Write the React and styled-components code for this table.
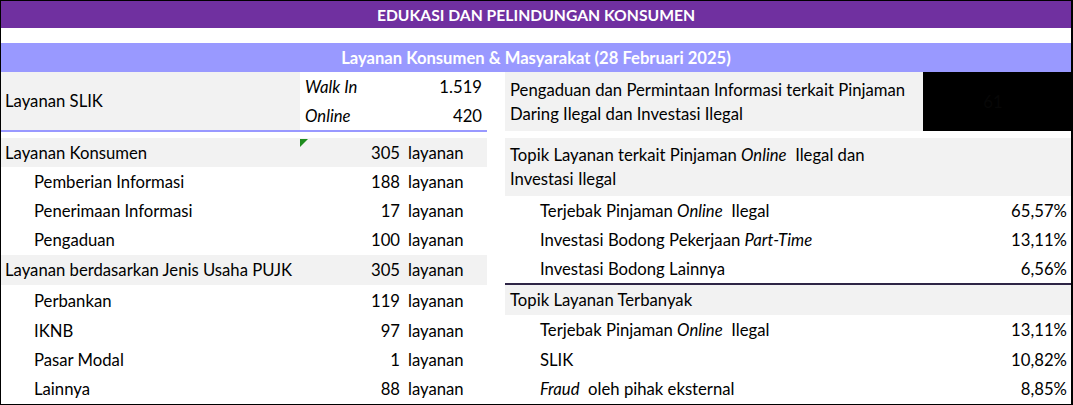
import React from "react";
import styled, { createGlobalStyle } from "styled-components";

const GlobalStyle = createGlobalStyle`
  html, body {
    margin: 0;
    padding: 0;
    background: #ffffff;
  }
  body {
    font-family: Lato, "Open Sans", sans-serif;
    color: #000000;
  }
`;

const konsumen = [
  { label: "Layanan Konsumen", value: "305", head: true, h: 29 },
  { label: "Pemberian Informasi", value: "188", h: 29 },
  { label: "Penerimaan Informasi", value: "17", h: 29 },
  { label: "Pengaduan", value: "100", h: 30 },
  { label: "Layanan berdasarkan Jenis Usaha PUJK", value: "305", head: true, h: 30 },
  { label: "Perbankan", value: "119", h: 31 },
  { label: "IKNB", value: "97", h: 29 },
  { label: "Pasar Modal", value: "1", h: 29 },
  { label: "Lainnya", value: "88", h: 29 },
];

const ilegal = [
  { label: <>Terjebak Pinjaman <i>Online</i>&nbsp; Ilegal</>, value: "65,57%" },
  { label: <>Investasi Bodong Pekerjaan <i>Part-Time</i></>, value: "13,11%" },
  { label: "Investasi Bodong Lainnya", value: "6,56%" },
];

const terbanyak = [
  { label: <>Terjebak Pinjaman <i>Online</i>&nbsp; Ilegal</>, value: "13,11%", h: 30 },
  { label: "SLIK", value: "10,82%", h: 29 },
  { label: <><i>Fraud</i>&nbsp; oleh pihak eksternal</>, value: "8,85%", h: 29 },
];

export default function App() {
  return (
    <>
      <GlobalStyle />
      <Sheet>
        <Title>EDUKASI DAN PELINDUNGAN KONSUMEN</Title>
        <SubTitle>Layanan Konsumen &amp; Masyarakat (28 Februari 2025)</SubTitle>
        <Body>
          <LeftCol>
            <SlikBlock>
              <SlikLabel>Layanan SLIK</SlikLabel>
              <SlikValues>
                <SlikRow>
                  <i>Walk In</i>
                  <span>1.519</span>
                </SlikRow>
                <SlikRow>
                  <i>Online</i>
                  <span>420</span>
                </SlikRow>
              </SlikValues>
            </SlikBlock>
            <LavenderRule />
            <CountList>
              {konsumen.map((r, i) => (
                <CountRow key={i} $head={r.head} $h={r.h}>
                  <Label $indent={!r.head}>{r.label}</Label>
                  <Num>{r.value}</Num>
                  <Unit>layanan</Unit>
                  {i === 0 && <CommentMark />}
                </CountRow>
              ))}
            </CountList>
          </LeftCol>

          <RightCol>
            <InfoBlock>
              <InfoText>
                <div>
                  Pengaduan dan Permintaan Informasi terkait Pinjaman
                  <br />
                  Daring Ilegal dan Investasi Ilegal
                </div>
              </InfoText>
              <BlackCell>61</BlackCell>
            </InfoBlock>
            <TopicHead $tall>
              <div>
                Topik Layanan terkait Pinjaman <i>Online</i>&nbsp; Ilegal dan
                <br />
                Investasi Ilegal
              </div>
            </TopicHead>
            {ilegal.map((r, i) => (
              <PctRow key={i} $h={29}>
                <span>{r.label}</span>
                <span>{r.value}</span>
              </PctRow>
            ))}
            <DarkRule />
            <TopicHead>
              <div>Topik Layanan Terbanyak</div>
            </TopicHead>
            {terbanyak.map((r, i) => (
              <PctRow key={i} $h={r.h}>
                <span>{r.label}</span>
                <span>{r.value}</span>
              </PctRow>
            ))}
          </RightCol>
        </Body>
      </Sheet>
    </>
  );
}

const Sheet = styled.div`
  width: 1073px;
  height: 405px;
  box-sizing: border-box;
  border: 1px solid #000000;
  border-right-width: 2px;
  overflow: hidden;
  font-size: 16.7px;
`;

const Title = styled.div`
  height: 27px;
  background: #7030a0;
  color: #ffffff;
  font-weight: 700;
  font-size: 15.7px;
  display: flex;
  align-items: center;
  justify-content: center;
  margin-bottom: 15px;
`;

const SubTitle = styled.div`
  height: 29px;
  background: #9999ff;
  color: #ffffff;
  font-weight: 700;
  font-size: 16.6px;
  display: flex;
  align-items: center;
  justify-content: center;
`;

const Body = styled.div`
  display: flex;
  gap: 18px;
`;

const LeftCol = styled.div`
  width: 486px;
  display: flex;
  flex-direction: column;
`;

const SlikBlock = styled.div`
  display: flex;
  height: 58px;
`;

const SlikLabel = styled.div`
  width: 295px;
  background: #f2f2f2;
  padding-left: 4px;
  display: flex;
  align-items: center;
`;

const SlikValues = styled.div`
  flex: 1;
  display: grid;
  grid-template-rows: 29px 29px;
`;

const SlikRow = styled.div`
  display: flex;
  align-items: center;
  justify-content: space-between;
  padding: 0 5px 0 5px;
`;

const LavenderRule = styled.div`
  height: 2px;
  background: #9999ff;
  margin-bottom: 6px;
`;

const CountList = styled.div`
  display: flex;
  flex-direction: column;
`;

const CountRow = styled.div`
  position: relative;
  height: ${(p) => p.$h}px;
  display: grid;
  grid-template-columns: 1fr 60px 87px;
  align-items: center;
  background: ${(p) => (p.$head ? "#f2f2f2" : "#ffffff")};
`;

const Label = styled.span`
  padding-left: ${(p) => (p.$indent ? 33 : 4)}px;
  white-space: nowrap;
`;

const Num = styled.span`
  text-align: right;
`;

const Unit = styled.span`
  padding-left: 8px;
`;

const CommentMark = styled.span`
  position: absolute;
  left: 299px;
  top: 1px;
  width: 0;
  height: 0;
  border-top: 8px solid #1e8c1e;
  border-right: 8px solid transparent;
`;

const RightCol = styled.div`
  flex: 1;
  display: flex;
  flex-direction: column;
`;

const InfoBlock = styled.div`
  display: flex;
  height: 59px;
  margin-bottom: 7px;
`;

const InfoText = styled.div`
  flex: 1;
  background: #f2f2f2;
  padding-left: 5px;
  display: flex;
  align-items: center;
  line-height: 24px;
  white-space: nowrap;
`;

const BlackCell = styled.div`
  width: 148px;
  background: #000000;
  color: #070707;
  display: flex;
  align-items: center;
  justify-content: center;
  padding-right: 8px;
  box-sizing: border-box;
`;

const TopicHead = styled.div`
  height: ${(p) => (p.$tall ? 58 : 30)}px;
  background: #f2f2f2;
  padding-left: 5px;
  display: flex;
  align-items: center;
  line-height: 24px;
  white-space: nowrap;
`;

const PctRow = styled.div`
  height: ${(p) => p.$h}px;
  display: flex;
  align-items: center;
  justify-content: space-between;
  padding: 0 4px 0 35px;
  white-space: nowrap;
`;

const DarkRule = styled.div`
  height: 2px;
  background: #2e2546;
`;
